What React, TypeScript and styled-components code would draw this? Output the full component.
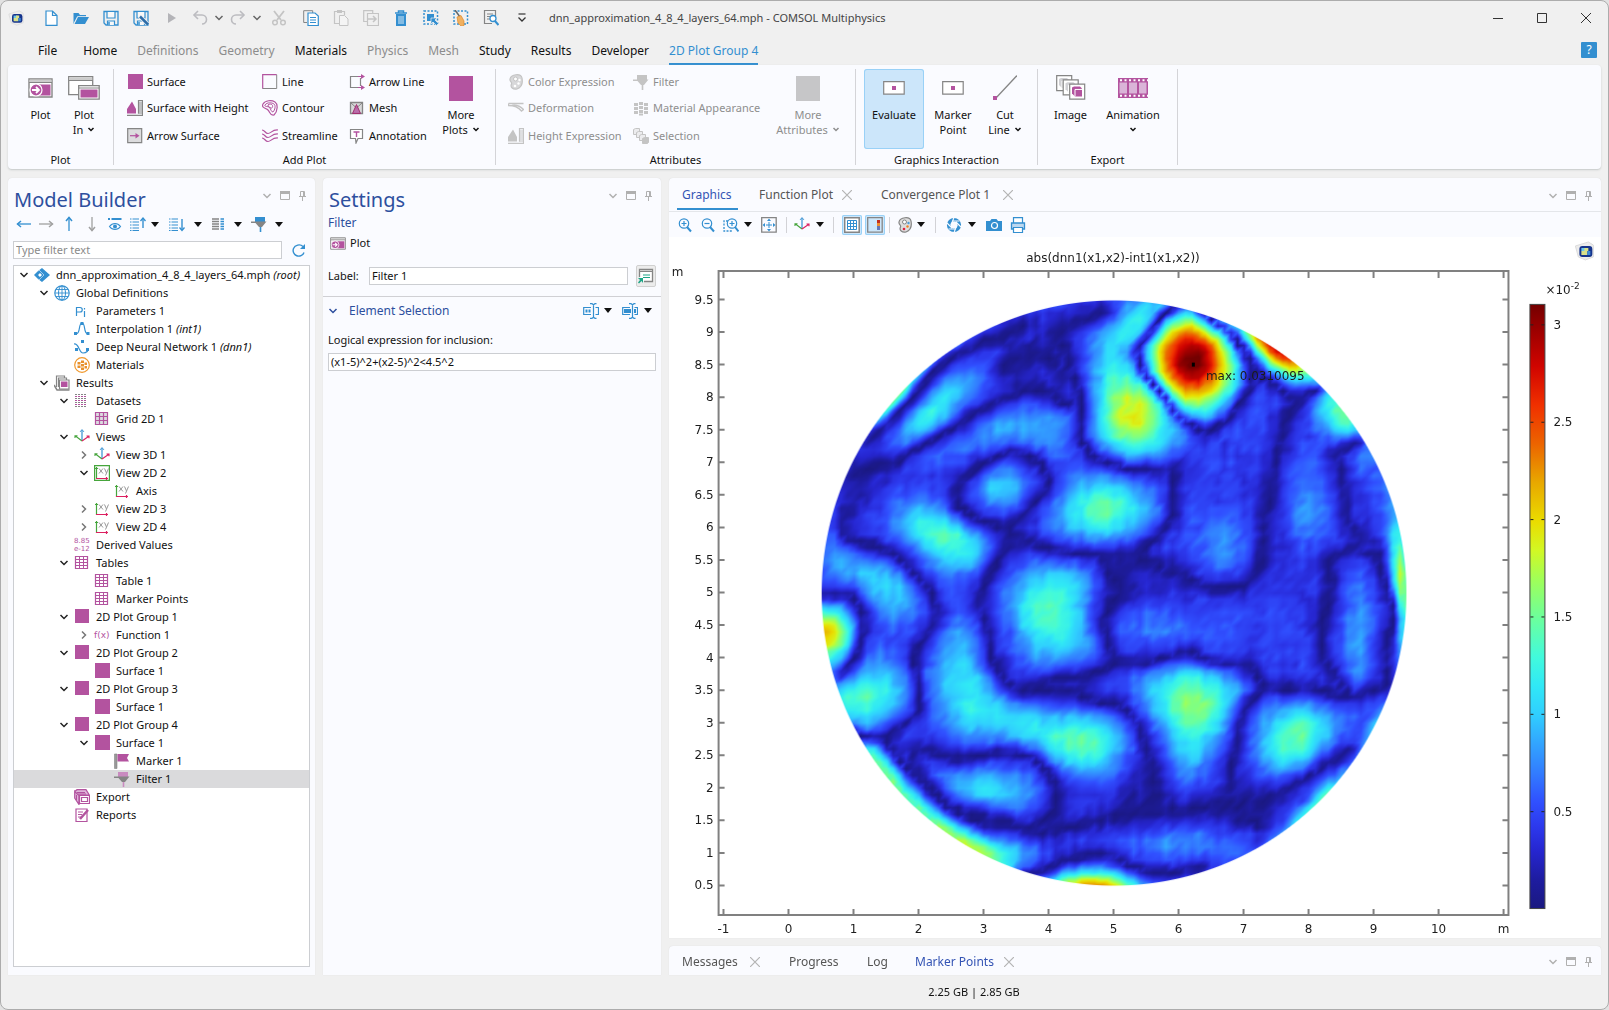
import React, { ReactNode, useLayoutEffect, useRef } from "react";
import styled, { createGlobalStyle, css } from "styled-components";

const PURPLE = "#b3539f";
const BLUE = "#338fd0";
const GREY = "#858585";
const PALE = "#c4c4c4";
const NAVY = "#2d4f9e";
const PANEL = "#fafbff";

const GlobalStyle = createGlobalStyle`
  * { box-sizing: border-box; }
  html, body, #root { height: 100%; }
  body {
    margin: 0;
    background: #e2e2e2;
    color: #111;
    font: 11px/18px "Noto Sans", "Open Sans", sans-serif;
  }
  button, input { font: inherit; color: inherit; }
  button { border: 0; padding: 0; background: none; }
  h1, h2 { margin: 0; font-weight: 400; }
  svg { display: block; flex: none; }
`;

/* ---------- window frame ---------- */

const Window = styled.div`
  display: flex;
  flex-direction: column;
  height: 100vh;
  min-height: 700px;
  background: #f0f0f0;
  border: 1px solid #acacac;
  border-radius: 8px;
  padding: 0 7px;
`;

const TitleBar = styled.header`
  display: flex;
  flex: none;
  align-items: center;
  height: 34px;
  margin-right: -7px;
`;

const AppMark = styled.span`
  display: flex;
  width: 28px;
`;

const QuickButton = styled.button<{ $w?: number }>`
  display: flex;
  align-items: center;
  justify-content: center;
  width: ${(p) => p.$w ?? 30}px;
  height: 24px;
`;

const WindowTitle = styled.span`
  flex: 1;
  margin-left: 11px;
  color: #444;
`;

const WindowButton = styled.button`
  display: flex;
  align-items: center;
  justify-content: center;
  width: 44px;
  height: 28px;
`;

const MenuBar = styled.nav`
  display: flex;
  flex: none;
  align-items: stretch;
  gap: 20px;
  height: 30px;
  padding: 0 4px 0 30px;
  font-size: 12px;
`;

const MenuTab = styled.button<{ $off?: boolean; $on?: boolean; $first?: boolean }>`
  margin-right: ${(p) => (p.$first ? 6 : 0)}px;
  padding-top: 3px;
  border-bottom: 2px solid ${(p) => (p.$on ? BLUE : "transparent")};
  color: ${(p) => (p.$on ? BLUE : p.$off ? "#8c8c8c" : "#111")};
`;

const HelpButton = styled.button`
  align-self: center;
  width: 16px;
  height: 16px;
  margin-left: auto;
  border-radius: 1px;
  background: ${BLUE};
  color: #fff;
  line-height: 16px;
`;

/* ---------- ribbon ---------- */

const Ribbon = styled.section`
  display: flex;
  flex: none;
  height: 104px;
  padding: 4px 0;
  background: ${PANEL};
  border-radius: 4px;
  box-shadow: 0 1px 2px #c4c8c8;
`;

const Group = styled.div<{ $w: number; $pad: number }>`
  display: flex;
  flex-direction: column;
  width: ${(p) => p.$w}px;
  padding-left: ${(p) => p.$pad}px;
  border-right: 1px solid #d4d4d8;
`;

const GroupBody = styled.div`
  display: flex;
  flex: none;
  height: 84px;
`;

const GroupLabel = styled.div<{ $pad: number }>`
  margin-left: -${(p) => p.$pad}px;
  text-align: center;
  line-height: 14px;
`;

const Commands = styled.div<{ $cols: string }>`
  display: grid;
  grid-template-columns: ${(p) => p.$cols};
  grid-template-rows: 25px 28px 28px;
  grid-auto-flow: column;
`;

const Command = styled.button`
  display: flex;
  align-items: center;
  gap: 4px;
  white-space: nowrap;
  &:disabled { color: #8e8e8e; }
`;

const BigButton = styled.button<{ $w: number; $on?: boolean }>`
  display: flex;
  flex-direction: column;
  align-items: center;
  width: ${(p) => p.$w}px;
  height: 80px;
  border-radius: 3px;
  line-height: 15px;
  &:disabled { color: #8e8e8e; }
  ${(p) => p.$on && css`background: #cce6fa; box-shadow: inset 0 0 0 1px #99d1f7;`}
`;

const BigIcon = styled.span`
  display: flex;
  align-items: center;
  height: 38px;
`;

const LabelLine = styled.span`
  display: flex;
  align-items: center;
  gap: 4px;
  height: 15px;
`;

/* ---------- panels ---------- */

const Workspace = styled.main`
  display: grid;
  grid-template-columns: 307fr 338fr 932fr;
  grid-template-rows: minmax(0, 1fr);
  gap: 8px;
  flex: 1;
  min-height: 0;
  padding-top: 9px;
`;

const Panel = styled.section<{ $pad?: string }>`
  display: flex;
  flex-direction: column;
  min-width: 0;
  padding: ${(p) => p.$pad ?? "0"};
  background: ${PANEL};
  border-radius: 4px 4px 0 0;
  box-shadow: 0 0 1px #d0d0d0;
`;

const PanelHead = styled.div`
  display: flex;
  flex: none;
  justify-content: space-between;
  height: 37px;
`;

const PanelTitle = styled.h1`
  padding: 3px 0 0 1px;
  font-size: 20px;
  line-height: 37px;
  color: ${NAVY};
`;

const PanelTools = styled.div`
  display: flex;
  align-items: center;
  gap: 8px;
  height: 34px;
  padding: 2px 3px 0 0;
`;

const ToolRow = styled.div`
  display: flex;
  align-items: center;
  height: 18px;
`;

const Tool = styled.button<{ $w: number; $on?: boolean }>`
  display: flex;
  align-items: center;
  justify-content: center;
  width: ${(p) => p.$w}px;
  height: 20px;
  border-radius: 2px;
  ${(p) => p.$on && css`background: #cce6fa; box-shadow: inset 0 0 0 1px #99d1f7;`}
`;

const TextBox = styled.input`
  flex: 1;
  min-width: 0;
  width: 100%;
  height: 18px;
  padding: 0 2px;
  border: 1px solid #ccced2;
  background: #fff;
  &::placeholder { color: #8a8a8a; opacity: 1; }
`;

const FilterRow = styled.div`
  display: flex;
  align-items: center;
  gap: 9px;
  margin: 7px 0 5px;
  padding-right: 3px;
`;

const Tree = styled.ul`
  flex: 1;
  min-height: 0;
  margin: 0;
  padding: 0;
  overflow: hidden;
  list-style: none;
  background: #fff;
  border: 1px solid #ccced2;
`;

const TreeRow = styled.li<{ $depth: number; $on?: boolean }>`
  display: flex;
  align-items: center;
  height: 18px;
  padding-left: ${(p) => p.$depth * 20}px;
  background: ${(p) => (p.$on ? "#dadadc" : "transparent")};
  white-space: pre;
`;

const Twisty = styled.span`
  display: flex;
  justify-content: center;
  width: 20px;
`;

const TreeIcon = styled.span`
  display: flex;
  width: 22px;
`;

const SubTitle = styled.div`
  height: 18px;
  margin-top: -1px;
  font-size: 12px;
  color: ${NAVY};
`;

const PlotButton = styled.button`
  display: flex;
  align-items: center;
  gap: 4px;
  height: 20px;
  margin-top: 1px;
  padding-left: 2px;
`;

const LabelRow = styled.div`
  display: flex;
  align-items: center;
  gap: 8px;
  margin-top: 12px;
  label { width: 33px; }
`;

const RenameButton = styled.button`
  display: flex;
  align-items: center;
  justify-content: center;
  width: 20px;
  height: 22px;
  border: 1px solid #d0d0d0;
  border-radius: 2px;
  background: #ececec;
`;

const SectionHead = styled.div`
  display: flex;
  align-items: center;
  height: 28px;
  margin: 9px -5px 0;
  padding: 0 8px 0 5px;
  border-top: 1px solid #d0d0d4;
`;

const SectionTitle = styled.h2`
  flex: 1;
  margin-left: 11px;
  font-size: 12px;
  color: ${NAVY};
`;

const FieldLabel = styled.label`
  margin: 7px 0 4px;
`;

const ExpressionRow = styled.div`
  display: flex;
`;

const RightColumn = styled.div`
  display: flex;
  flex-direction: column;
  gap: 8px;
  min-width: 0;
`;

const GraphicsPanel = styled(Panel)`
  flex: 1;
  min-height: 0;
`;

const TabStrip = styled.div`
  display: flex;
  flex: none;
  height: 34px;
  padding: 0 5px 0 8px;
  border-bottom: 1px solid #e4e6ea;
`;

const TabSet = styled.div`
  display: flex;
  flex: 1;
`;

const Tab = styled.button<{ $on?: boolean; $line?: boolean; $w: number }>`
  display: flex;
  align-items: center;
  gap: 7px;
  width: ${(p) => p.$w}px;
  height: 32px;
  padding: 4px 0 0 5px;
  border-bottom: 2px solid ${(p) => (p.$line ? BLUE : "transparent")};
  font-size: 12px;
  white-space: nowrap;
  color: ${(p) => (p.$on ? "#3454b4" : "#555")};
`;

const TabGap = styled.span`
  width: 16px;
`;

const TabName = styled.span<{ $w: number }>`
  flex: none;
  width: ${(p) => p.$w}px;
  text-align: left;
`;

const BottomStrip = styled.div`
  display: flex;
  align-items: center;
  height: 29px;
  padding: 0 5px 0 8px;
  overflow: hidden;
`;

const GraphicsTools = styled.div`
  display: flex;
  flex: none;
  align-items: center;
  height: 25px;
  padding-left: 4px;
`;

const Rule = styled.span<{ $gap: number }>`
  width: 1px;
  height: 16px;
  margin: 0 ${(p) => p.$gap}px;
  background: #d2d2d6;
`;

const ToggleSet = styled.div`
  display: flex;
  gap: 3px;
`;

const PlotArea = styled.div`
  display: grid;
  grid-template-rows: minmax(0, 1fr);
  flex: 1;
  min-height: 0;
  background: #fff;
  > * {
    grid-area: 1 / 1;
    width: 100%;
    height: 100%;
    min-height: 0;
    object-fit: contain;
  }
`;

const StatusBar = styled.footer`
  flex: none;
  height: 34px;
  padding-left: 339px;
  text-align: center;
  line-height: 34px;
`;

/* ---------- icons ---------- */

const Svg = ({ w = 16, h = 16, children }: { w?: number; h?: number; children: ReactNode }) => (
  <svg width={w} height={h} viewBox={`0 0 ${w} ${h}`} fill="none" aria-hidden="true">{children}</svg>
);

const Caret = () => <Svg w={8} h={5}><path d="M0 0h8L4 5z" fill="#111" /></Svg>;
const Chevron = ({ c = "#222" }) => <Svg w={10} h={6}><path d="M1.5 1L5 4.5 8.5 1" stroke={c} strokeWidth="1.5" /></Svg>;
const MiniChevron = () => <Svg w={8} h={5}><path d="M1.5 1L4 3.500 6.500 1" stroke="currentColor" strokeWidth="1.500" /></Svg>;
const ChevronRight = () => <Svg w={6} h={10}><path d="M1 1.500L4.500 5 1 8.500" stroke="#777" strokeWidth="1.500" /></Svg>;
const Cross = () => <Svg w={10} h={10}><path d="M0 0l10 10M10 0L0 10" stroke="#b4b4b4" strokeWidth="1.200" /></Svg>;

const DockIcons = () => (
  <PanelTools>
    <Chevron c="#b0b0b0" />
    <Svg w={10} h={10}><path d="M.5.5h9v8h-9z" stroke="#b0b0b0" /><path d="M0 0h10v3H0z" fill="#b0b0b0" /></Svg>
    <Svg w={9} h={10}><path d="M2.500 5V.5h4V5M1 5.500h7M4.500 6v4M5.500 1v4" stroke="#b0b0b0" /></Svg>
  </PanelTools>
);

const Cube = ({ s = 16 }) => (
  <svg width={s} height={s} viewBox="0 0 20 20" aria-hidden="true">
    <path d="M1 5l13-4 5 3v12l-8 3-7-3z" fill="#ececec" stroke="#dcdcdc" />
    <rect x="5" y="5" width="13" height="11" rx="3" fill="#16348c" />
    <path d="M7 7h5v3H7z" fill="#6cc8e8" /><path d="M10 7h4v3h-4zM7 10h6v4H7z" fill="#d8e08a" /><path d="M13 10h3v4h-3z" fill="#3c8ad8" />
  </svg>
);

const NewFile = () => <Svg><path d="M3 1h6.500L14 5.500V15.300H3zM9.500 1v4.500H14" stroke={BLUE} strokeWidth="1.200" fill="#fff" /></Svg>;
const OpenFile = () => <Svg><path d="M.5 14V3h5l1.500 2h6v2H4.500z" fill={BLUE} /><path d="M1.500 14L5 7h11l-4 7z" fill={BLUE} /><path d="M1 13.500L4.500 6.500H15" stroke="#f0f0f0" strokeWidth=".8" /></Svg>;
const Floppy = () => <><path d="M1 1.500h14v13.500H3L1 13z" stroke={BLUE} strokeWidth="1.300" /><path d="M4 1.500h8V8H4zM4.500 15v-4h7v4" stroke={BLUE} strokeWidth="1.200" fill="#f8f8f8" /><path d="M6 12v3" stroke={BLUE} strokeWidth="1.500" /></>;
const SaveIcon = () => <Svg><Floppy /></Svg>;
const SaveAs = () => <Svg><Floppy /><path d="M6.500 6l8 8" stroke="#f0f0f0" strokeWidth="4" /><path d="M7 6.500l8 8" stroke="#2c6ca8" strokeWidth="2.500" /></Svg>;
const Play = () => <Svg><path d="M5 3l8 5-8 5z" fill="#b4b4b8" /></Svg>;
const Undo = ({ flip = false }) => <Svg><g transform={flip ? "matrix(-1 0 0 1 16 0)" : undefined}><path d="M2 5h8a4.500 4.500 0 010 9" stroke="#bcbcc0" strokeWidth="1.600" /><path d="M6 1L2 5l4 4" stroke="#bcbcc0" strokeWidth="1.600" /></g></Svg>;
const Cut = () => <Svg><path d="M3 1l7 9M13 1L6 10" stroke={PALE} strokeWidth="1.800" /><circle cx="4" cy="12.500" r="2.300" stroke={PALE} strokeWidth="1.500" /><circle cx="12" cy="12.500" r="2.300" stroke={PALE} strokeWidth="1.500" /></Svg>;
const Copy = () => <Svg><path d="M4 12.500H.7V.7h9V3" stroke={GREY} /><path d="M5 3h7l3.300 3v9.500H5z" fill="#fff" stroke={BLUE} strokeWidth="1.200" /><path d="M7 7.500h6M7 10h6M7 12.500h6" stroke={BLUE} /></Svg>;
const Paste = () => <Svg><path d="M6 13.500H1.500v-12h10V5" stroke={PALE} strokeWidth="1.200" /><path d="M4 0h5v3H4z" fill={PALE} /><path d="M6.500 5.500h5L15 9v6.500H6.500z" stroke={PALE} fill="#f4f4f4" /></Svg>;
const Duplicate = () => <Svg><path d="M4 11.500H.7V.7h9V3.500M4.500 3.500h11v12h-11z" stroke={PALE} strokeWidth="1.200" /><path d="M5 9h8M10 6l3 3-3 3" stroke={PALE} strokeWidth="1.500" /></Svg>;
const Trash = () => <Svg><path d="M5.500 2.500V1h5v1.500M2 3h12" stroke={BLUE} strokeWidth="1.500" /><path d="M3 4h10v12H3z" fill={BLUE} /><path d="M6 6v8M8 6v8M10 6v8" stroke="#fff" strokeWidth=".8" /></Svg>;
const SelectIcon = () => <Svg><path d="M1 1h13.500v13H1z" stroke={BLUE} strokeWidth="1.500" strokeDasharray="2 1.500" /><path d="M4 4h7v7H4z" fill={BLUE} /><path d="M8 8h6l-2 2 3.500 3.500-2 2L10 12l-2 2z" fill={BLUE} stroke="#f0f0f0" strokeWidth=".7" /></Svg>;
const Broom = () => <Svg><path d="M1 1h13.500v13H1z" stroke={BLUE} strokeWidth="1.500" strokeDasharray="2 1.500" /><path d="M2 0l5 7" stroke="#666" strokeWidth="1.500" /><path d="M4 7l4-1.500 3 5.500v4.500L8 16l-3-3z" fill="#f0b060" stroke="#e08a28" strokeWidth=".7" /></Svg>;
const Find = () => <Svg><path d="M9 13.500H1.500v-13h11V6M4 4h6M4 6.500h4M4 9h3" stroke={GREY} strokeWidth="1.200" /><circle cx="10" cy="8.500" r="3" stroke={BLUE} strokeWidth="1.300" fill="#fff" /><path d="M12 11l3.500 4" stroke={BLUE} strokeWidth="2" /></Svg>;
const More = () => <Svg w={10} h={10}><path d="M1.500 1h7" stroke="#333" strokeWidth="1.200" /><path d="M1.500 4.500L5 8l3.500-3.500" stroke="#333" strokeWidth="1.300" /></Svg>;

const PlotWin = ({ w = 25, h = 20 }) => (
  <svg width={w} height={h} viewBox="0 0 25 20" fill="none" aria-hidden="true">
    <path d="M1 1h23v18H1z" fill="#fff" stroke={GREY} strokeWidth="1.400" /><path d="M1.500 1.500h22v3h-22z" fill="#ccc" /><path d="M1 4.500h23" stroke={GREY} />
    <path d="M11 6.500h11.500v11H11z" fill={PURPLE} /><circle cx="8" cy="12" r="6" fill={PURPLE} stroke="#fff" strokeWidth="1.200" /><path d="M4 12h7M8 9l3 3-3 3" stroke="#fff" strokeWidth="1.800" />
  </svg>
);
const PlotIn = () => <Svg w={32} h={24}><path d="M.7.7h24v18H.7z" fill="#fff" stroke={GREY} strokeWidth="1.300" /><path d="M1.300 1.300h23v3h-23z" fill="#ccc" /><path d="M1 4.500h24" stroke={GREY} /><path d="M10.700 9.700h20.500v13.500H10.700z" fill="#fff" stroke={GREY} strokeWidth="1.300" /><path d="M11 12h20" stroke={GREY} /><path d="M12.500 13.500h17v8h-17z" fill={PURPLE} /></Svg>;

const Square = ({ s = 15, c = PURPLE }) => <Svg><path d={`M0 0h${s}v${s}h-${s}z`} transform="translate(1 0)" fill={c} /></Svg>;
const BigSquare = ({ c = PURPLE }) => <Svg w={24} h={25}><path d="M0 0h24v25H0z" fill={c} /></Svg>;
const Height = ({ off = false }) => <Svg><path d="M0 13.500L0 9 5 1.500 9 9v4.500z" fill={off ? PALE : PURPLE} /><path d="M0 15.300h15.500V.7h-4v13" stroke={off ? PALE : GREY} strokeWidth="1.200" /><path d="M12 3h3M12 5h3M12 7h3M12 9h3M12 11h3M12 13h3" stroke={off ? PALE : GREY} /></Svg>;
const ArrowSurface = () => <Svg><path d="M.7.7h14v14H.7z" fill="#dcdcde" stroke={GREY} strokeWidth="1.200" /><path d="M3 7.700h7" stroke={PURPLE} strokeWidth="1.200" /><path d="M8.500 5l4 2.700-4 2.700z" fill={PURPLE} /></Svg>;
const LineIcon = () => <Svg><path d="M.7 14.700V.7h14" stroke={PURPLE} strokeWidth="1.200" /><path d="M.7 14.500h14V.7" stroke={GREY} /></Svg>;
const Contour = () => <Svg><path d="M1 4c2-4 9-4 12-2s3 9-1 13c-4 1-4-3-6-5S-1 8 1 4z" stroke={PURPLE} strokeWidth="1.200" /><path d="M3 5c2-3 7-2.500 9-1s1 6-1 8c-2 0-2-3-3.500-4.500S2 7 3 5z" stroke={PURPLE} /><path d="M6 5c1-1.500 4-1 4.500.5s-.5 3-1.500 2.500S5.500 6.500 6 5z" stroke={PURPLE} /></Svg>;
const Streamline = () => <Svg>{[1, 5, 9].map((y) => <path key={y} d={`M0 ${y + 1}c3 0 3 3.500 6 3.500s4-4 10-3.500`} stroke={PURPLE} strokeWidth="1.200" />)}</Svg>;
const ArrowLine = () => <Svg><path d="M10 2.500H1.500v11H10M11.500 4v8" stroke={GREY} strokeWidth="1.200" /><path d="M9 2.500h4M9 13.500h4" stroke={PURPLE} strokeWidth="1.200" /><path d="M12 0l4 2.500L12 5zM12 11l4 2.500-4 2.500z" fill={PURPLE} /></Svg>;
const MeshIcon = () => <Svg><path d="M1.500 2.500h12v11h-12z" fill="#d8d8da" stroke={GREY} strokeWidth="1.300" /><path d="M2 3l5.500 5L13 3" stroke={GREY} /><path d="M3.500 13.500l4-9 4 9z" fill={PURPLE} fillOpacity=".8" stroke="#a03070" /></Svg>;
const Annotation = () => <Svg><path d="M1.500 1.500h12v9H9L7 15l-.5-4.500h-5z" stroke={GREY} strokeWidth="1.200" fill="#fff" /><path d="M4.500 4h6M7.500 4v5" stroke={PURPLE} strokeWidth="1.400" /></Svg>;
const PaletteIcon = ({ off = false }) => (
  <Svg><path d="M2 5c1-5 11-6 12-1s0 9-5 11c-4 1-7-2-5.500-5 1-2-2-2-1.500-5z" fill={off ? "#d8d8da" : "#ddd"} stroke={off ? PALE : GREY} strokeWidth="1.200" /><circle cx="7.500" cy="5" r="2" fill="#fff" stroke={off ? PALE : GREY} /><circle cx="11.500" cy="6" r="1.200" fill={off ? "#fff" : "#4c9cd8"} /><circle cx="10.500" cy="9.500" r="1.200" fill={off ? "#fff" : "#f08020"} /><circle cx="7" cy="12" r="1.300" fill={off ? "#fff" : "#e02040"} /></Svg>
);
const Deform = () => <Svg><path d="M.5 3.500h15M.5 3.500v2c5 0 9 .5 13 5.500l2-1.500C12 6 9 4.500 4 5.500" stroke={PALE} strokeWidth="1.400" /></Svg>;
const Funnel = ({ top = PALE, body = PALE }) => <Svg><path d="M4 1h10v5H4z" fill={top} /><path d="M0 5.500h15.500L11 11H8L4.500 7H0z" fill={body} /><path d="M9.500 11v5" stroke={top} strokeWidth="1.600" /></Svg>;
const MaterialApp = () => <Svg>{[1, 6, 11].map((x) => [3, 7, 11].map((y) => <rect key={`${x}-${y}`} x={x} y={x === 6 ? y - 1 : y} width="4" height="3" fill={PALE} />))}<path d="M6 13.500h4v2H6z" fill={PALE} /></Svg>;
const Selection = () => <Svg>{[0, 3, 6, 9].map((o) => <path key={o} d={`M${o + 0.5} ${o + 1.5}l2-1h4v5l-1 1h-5z`} fill={o === 9 ? PALE : "#ececee"} stroke={PALE} />)}</Svg>;
const Evaluate = () => <Svg w={22} h={14}><path d="M.7.7h20.500v12.500H.7z" fill="#fff" stroke={GREY} strokeWidth="1.200" /><path d="M9 5h4v4H9z" fill={PURPLE} /></Svg>;
const CutLine = () => <Svg w={24} h={26}><path d="M2 24L24 .5" stroke={GREY} strokeWidth="1.300" /><path d="M0 21h4v4H0z" fill={PURPLE} /></Svg>;
const ImageIcon = () => <Svg w={30} h={26}>{[0, 6.5, 13].map((o, i) => <g key={o} transform={`translate(${o} ${o * 0.65})`}><path d="M.7.7h15v15H.7z" fill="#fff" stroke={GREY} strokeWidth="1.200" /><path d="M3 4l2-1h6l2 2v8H6l-3-3z" fill={i === 2 ? PURPLE : "#d0d0d4"} /><path d="M6 13V6h7" stroke="#fff" /></g>)}</Svg>;
const Film = () => <Svg w={30} h={20}><path d="M0 0h30v20H0z" fill={PURPLE} /><path d="M1.500 4.500h7.500v11H1.500zM11 4.500h8v11h-8zM21 4.500h7.500v11H21z" fill="#dab4d8" /><path d="M2 2.200h28M2 17.800h28" stroke="#fff" strokeWidth="2" strokeDasharray="2 2.500" /></Svg>;

const Arrow = ({ dir, c = BLUE }: { dir: number; c?: string }) => <Svg><g transform={`rotate(${dir} 8 8)`}><path d="M1.500 8H15" stroke={c} strokeWidth="1.300" /><path d="M5 5L1.500 8 5 11" stroke={c} strokeWidth="1.500" /></g></Svg>;
const EyeIcon = () => <Svg><path d="M1 3h2M4.500 3h10" stroke={BLUE} strokeWidth="2" /><path d="M2.500 10.500c3-4 8-4 11 0-3 4-8 4-11 0z" stroke={BLUE} strokeWidth="1.200" /><circle cx="8" cy="10.500" r="2" fill={BLUE} /></Svg>;
const ListArrow = ({ up = false }) => <Svg><path d="M0 3h9M0 6h9M0 9h9M0 12h9M0 14.500h9" stroke={BLUE} strokeDasharray="1.500 1 8" /><path d={up ? "M13 3v9" : "M13 3v11"} stroke={BLUE} strokeWidth="1.400" /><path d={up ? "M10.500 5L13 2l2.500 3" : "M10.500 11.500L13 14.500l2.500-3"} stroke={BLUE} strokeWidth="1.300" /></Svg>;
const Columns = () => <Svg w={12}><path d="M0 3h7M0 5.500h7M0 8h7M0 10.500h7M0 13h7" stroke={GREY} strokeWidth="1.500" /><path d="M8.500 3h3.500M8.500 5.500h3.500M8.500 8h3.500M8.500 10.500h3.500M8.500 13h3.500" stroke={BLUE} strokeWidth="1.500" /></Svg>;
const Refresh = () => <Svg><path d="M13 10.500A5.500 5.500 0 112.500 6.500C4 3 9 1.500 12 4.500" stroke={BLUE} strokeWidth="1.400" /><path d="M14 2v5H9z" fill={BLUE} /></Svg>;

const Axes = () => <Svg><path d="M8 1v10" stroke={BLUE} strokeWidth="1.200" /><path d="M6 3l2-2.500L10 3" stroke={BLUE} strokeWidth=".8" /><path d="M8 12L1.500 7M1 9V6.700h2.500" stroke="#46a53c" strokeWidth="1.100" /><path d="M8 12l6.500-4.500M12.500 7h2.500v2.300" stroke="#dc2060" strokeWidth="1.100" /></Svg>;
const XyAxes = ({ boxed = false }) => (
  <Svg>{boxed && <path d="M.6.6h14.800v14.800H.6z" stroke="#46a53c" strokeWidth="1.200" />}<path d="M2.500 14V2M1 3.500h3" stroke="#46a53c" strokeWidth="1.200" /><path d="M2 13.500h12M12.500 12v3" stroke="#dc2060" strokeWidth="1.200" /><path d="M5 3.500l4 5M9 3.500l-4 5M10.500 3.500l2 4.500M14.500 3.500l-3 7" stroke="#999" /></Svg>
);
const RootIcon = () => <Svg><path d="M0 8l4-4 3 1-3 3 3 3-3 1z" fill={BLUE} /><path d="M8 1l8 7-8 7-4-3 4-4-4-4z" fill={BLUE} /><path d="M5 3l5 5-5 5" stroke="#bcdcf4" strokeWidth=".8" /></Svg>;
const Globe = () => <Svg><circle cx="8" cy="8" r="7.200" stroke={BLUE} strokeWidth="1.200" /><ellipse cx="8" cy="8" rx="3.500" ry="7.200" stroke={BLUE} /><path d="M8 1v14M1 8h14M2 4.500h12M2 11.500h12" stroke={BLUE} strokeWidth=".9" /></Svg>;
const ParamIcon = () => <Svg><path d="M2.500 13V4.500H6a2.200 2.200 0 010 4.500H2.500M10.500 8v6M10.500 5v1.500" stroke={BLUE} strokeWidth="1.200" /></Svg>;
const Interp = () => <Svg><path d="M2 13c5 0 2-11 6-11s1 11 6 11" stroke={BLUE} strokeWidth="1.200" /><path d="M0 11h3v3H0zM6.500 1h3v3h-3zM12.500 11h3v3h-3z" fill={BLUE} /></Svg>;
const DnnIcon = () => <Svg><path d="M0 5c5-1 5 9 9 9s4-2 5-2" stroke={BLUE} strokeWidth="1.200" /><path d="M7 1h3v3H7zM1 9h3v3H1zM12 9h3v3h-3z" fill={BLUE} /></Svg>;
const MaterialsIcon = () => <Svg><circle cx="8" cy="8" r="7.300" stroke="#f0982c" strokeWidth="1.200" /><path d="M3.500 5h3v2.500h-3zM7 3.500h3V6H7zM10.500 5.500h2.500V8h-2.500zM7 7h3v2.500H7zM10.500 9h2.500v2.500h-2.500zM7 10.500h3V13H7zM3.500 8.500h3V11h-3z" fill="#e8912c" /></Svg>;
const ResultsIcon = () => <Svg><path d="M2.500 12V1h8v2M4.500 12V3h8v2" stroke={GREY} strokeWidth="1.200" /><path d="M0 10l3 5h12.500" stroke={GREY} strokeWidth="1.500" /><path d="M5.500 5h9.500v9H5.500z" fill="#fff" stroke={GREY} strokeWidth="1.200" /><path d="M7 6.500h6.500v5.500H7z" fill={PURPLE} /></Svg>;
const Datasets = () => <Svg>{[2, 4, 6, 8, 10, 12, 14].map((y, i) => <path key={y} d={`M1 ${y - 0.5}h12`} stroke={i % 2 ? PURPLE : GREY} strokeDasharray="2 1" />)}</Svg>;
const GridIcon = ({ fill = "#fff", n = 3 }) => <Svg><path d="M1.500 1.500h12v12h-12z" fill={fill} stroke={PURPLE} strokeWidth="1.200" />{n === 3 ? <path d="M5.500 1v13M9.500 1v13M1 5.500h12.500M1 9.500h12.500" stroke={PURPLE} strokeWidth="1.200" /> : <path d="M5.500 1v13M9.500 1v13M1 4.500h12.500M1 7.500h12.500M1 10.500h12.500" stroke={PURPLE} />}</Svg>;
const TinyText = styled.span<{ $s: number }>`
  width: 18px;
  font: ${(p) => p.$s}px/8px "DejaVu Sans", sans-serif;
  color: ${PURPLE};
  white-space: pre;
`;
const Flag = () => <Svg><path d="M.5 1h2.500v14.500H.5z" fill="#999" stroke={GREY} strokeWidth=".6" /><path d="M3.500 1H15l-2 4 2 3.500H3.500z" fill={PURPLE} /></Svg>;
const ExportIcon = () => <Svg><path d="M.7 2.500L5 6.500v9L.7 9zM.7 2.500L3 .7h9L15.300 6H5" fill="#dfb4da" stroke={PURPLE} strokeWidth="1.200" /><path d="M5.500 6.500h10v8h-10zM7.500 8.500h6v4h-6z" stroke={PURPLE} strokeWidth="1.200" fill="#fff" /><path d="M3 3.500h8M4 5h8M2.500 6v5" stroke={PURPLE} /></Svg>;
const ReportsIcon = () => <Svg><path d="M2 2h11v12.500H2z" stroke={PURPLE} strokeWidth="1.200" /><path d="M4 5h5M4 7.500h4M4 10h3" stroke={PURPLE} /><path d="M6 12l8-9" stroke={PURPLE} strokeWidth="2.500" /></Svg>;

const Zoom = ({ mode }: { mode: "in" | "out" | "box" }) => (
  <Svg>{mode === "box" && <path d="M5 4H1v10h8" stroke={BLUE} strokeWidth="1.300" strokeDasharray="2 1.300" />}<circle cx={mode === "box" ? 9 : 7} cy="6.500" r="4.700" stroke={BLUE} strokeWidth="1.200" fill={PANEL} /><path d={mode === "box" ? "M12 10l3.500 4.500" : "M10 10l4 4.500"} stroke={BLUE} strokeWidth="2" /><path d={mode === "out" ? "M4.500 6.500h5" : mode === "in" ? "M4.500 6.500h5M7 4v5" : "M6.500 6.500h5M9 4v5"} stroke={BLUE} strokeWidth="1.200" /></Svg>
);
const Extents = () => <Svg><path d="M.7.7h14.500v14.500H.7z" stroke={GREY} strokeWidth="1.300" /><path d="M8 1.500L10 4H6zM8 14.500L10 12H6zM1.500 8L4 6v4zM14.500 8L12 6v4z" fill={BLUE} /><path d="M8 5v6M5 8h6" stroke={BLUE} /></Svg>;
const GridToggle = () => <Svg><path d="M.7.7h14.500v14.500H.7z" stroke={GREY} strokeWidth="1.500" fill="#fff" /><path d="M3.500 3.500h9v9h-9zM6.500 3v10M9.500 3v10M3 6.500h10M3 9.500h10" stroke={BLUE} /></Svg>;
const LegendToggle = () => <Svg><path d="M.7.7h14.500v14.500H.7z" stroke={GREY} strokeWidth="1.300" /><path d="M10 3h3v3h-3z" fill="#c03020" /><path d="M10 6h3v3h-3z" fill="#f09030" /><path d="M10 9h3v4h-3z" fill="#6478b8" /></Svg>;
const Aperture = () => <Svg><circle cx="8" cy="8" r="5.300" stroke={BLUE} strokeWidth="3.600" /><path d="M5 8L8 .5M6 11L1 6M10 12H2.500M11 8l-3 7.500M10 5l5 5M6 4h7.500" stroke={PANEL} strokeWidth="1.100" /></Svg>;
const Camera = () => <Svg><path d="M0 4h4l1.500-2h5L12 4h4v10H0z" fill={BLUE} /><circle cx="8.500" cy="8.500" r="3" stroke="#fff" strokeWidth="1.200" /></Svg>;
const Printer = () => <Svg><path d="M3.500 6V.7h9V6" stroke={BLUE} strokeWidth="1.200" fill="#fff" /><path d="M1.500 6h13v6h-13z" fill="#bcd8f0" stroke={BLUE} strokeWidth="1.300" /><path d="M3.500 10.500h9v5h-9z" fill="#fff" stroke={BLUE} strokeWidth="1.200" /></Svg>;
const FieldIcon = ({ full = false }) => <Svg><path d="M8 4.500H.7v7H8M12.500 4.500h3v7h-3" stroke={BLUE} strokeWidth="1.200" /><path d="M7 .7h2l1.500 1 1.500-1h1.500M7 15.300h2l1.500-1 1.500 1h1.500M10.500 1.500v13" stroke={BLUE} strokeWidth="1.200" /><path d={full ? "M2 6h7v4H2zM12 6h2v4h-2z" : "M2.500 6.500h2v3h-2zM5.500 6.500h2v3h-2z"} fill={BLUE} /></Svg>;
const RenameIcon = () => <Svg><path d="M1.500 9V1.500h13v12H6" stroke={GREY} strokeWidth="1.300" fill="#fff" /><path d="M1.500 1.500h13v2h-13z" fill="#ccc" stroke={GREY} /><path d="M5 7h7M5 9.500h7" stroke="#1ea587" strokeWidth="1.200" /><path d="M0 10h5v5L3.500 13 1 15.500 0 14.500 2 12z" fill="#1ea587" /></Svg>;

/* ---------- tree content ---------- */

type Node = { d: number; open?: boolean; icon: ReactNode; text: string; tag?: string; on?: boolean };

const NODES: Node[] = [
  { d: 0, open: true, icon: <RootIcon />, text: "dnn_approximation_4_8_4_layers_64.mph", tag: "root" },
  { d: 1, open: true, icon: <Globe />, text: "Global Definitions" },
  { d: 2, icon: <ParamIcon />, text: "Parameters 1" },
  { d: 2, icon: <Interp />, text: "Interpolation 1", tag: "int1" },
  { d: 2, icon: <DnnIcon />, text: "Deep Neural Network 1", tag: "dnn1" },
  { d: 2, icon: <MaterialsIcon />, text: "Materials" },
  { d: 1, open: true, icon: <ResultsIcon />, text: "Results" },
  { d: 2, open: true, icon: <Datasets />, text: "Datasets" },
  { d: 3, icon: <GridIcon fill="#dcdce0" />, text: "Grid 2D 1" },
  { d: 2, open: true, icon: <Axes />, text: "Views" },
  { d: 3, open: false, icon: <Axes />, text: "View 3D 1" },
  { d: 3, open: true, icon: <XyAxes boxed />, text: "View 2D 2" },
  { d: 4, icon: <XyAxes />, text: "Axis" },
  { d: 3, open: false, icon: <XyAxes />, text: "View 2D 3" },
  { d: 3, open: false, icon: <XyAxes />, text: "View 2D 4" },
  { d: 2, icon: <TinyText $s={7}>{"8.85\ne-12"}</TinyText>, text: "Derived Values" },
  { d: 2, open: true, icon: <GridIcon n={4} />, text: "Tables" },
  { d: 3, icon: <GridIcon n={4} />, text: "Table 1" },
  { d: 3, icon: <GridIcon n={4} />, text: "Marker Points" },
  { d: 2, open: true, icon: <Square s={14} />, text: "2D Plot Group 1" },
  { d: 3, open: false, icon: <TinyText $s={9}>f(x)</TinyText>, text: "Function 1" },
  { d: 2, open: true, icon: <Square s={14} />, text: "2D Plot Group 2" },
  { d: 3, icon: <Square />, text: "Surface 1" },
  { d: 2, open: true, icon: <Square s={14} />, text: "2D Plot Group 3" },
  { d: 3, icon: <Square />, text: "Surface 1" },
  { d: 2, open: true, icon: <Square s={14} />, text: "2D Plot Group 4" },
  { d: 3, open: true, icon: <Square />, text: "Surface 1" },
  { d: 4, icon: <Flag />, text: "Marker 1" },
  { d: 4, icon: <Funnel top="#c98bc0" body={GREY} />, text: "Filter 1", on: true },
  { d: 2, icon: <ExportIcon />, text: "Export" },
  { d: 2, icon: <ReportsIcon />, text: "Reports" },
];

/* ---------- error field ---------- */

const VIEW_W = 932;
const VIEW_H = 702;
const toX = (x: number) => 119 + 65.1 * x;
const toY = (y: number) => 356 + 65.2 * (5 - y);

/* value in units of 1e-2, followed by r, g, b */
const COLORS: number[][] = [
  [0, 26, 24, 128], [0.15, 30, 28, 160], [0.3, 38, 38, 208], [0.42, 44, 56, 236], [0.55, 48, 80, 255],
  [0.7, 50, 124, 255], [0.85, 50, 164, 255], [1, 48, 206, 255], [1.15, 48, 232, 246], [1.3, 66, 250, 220],
  [1.5, 108, 255, 156], [1.7, 160, 255, 88], [1.85, 210, 248, 36], [2, 234, 220, 0], [2.2, 232, 168, 0],
  [2.4, 236, 100, 0], [2.6, 240, 48, 0], [2.8, 208, 4, 0], [3, 152, 0, 0], [3.12, 116, 0, 0],
];

function colorAt(v: number): [number, number, number] {
  let k = 1;
  while (k < COLORS.length - 1 && COLORS[k][0] < v) k++;
  const a = COLORS[k - 1], b = COLORS[k];
  const t = Math.max(0, Math.min(1, (v - a[0]) / (b[0] - a[0])));
  return [a[1] + (b[1] - a[1]) * t, a[2] + (b[2] - a[2]) * t, a[3] + (b[3] - a[3]) * t];
}

/* x, y, semi axes, angle in degrees, amplitude */
const PEAKS: number[][] = [
  [6.2, 8.56, 0.5, 0.52, 0, 2.72], [7.5, 8.8, 0.46, 0.22, -42, 2.4], [5.28, 7.65, 0.38, 0.46, 25, 1.25],
  [2.25, 7.82, 0.62, 0.26, 42, 0.85], [1.68, 8.1, 0.5, 0.1, 49, 1.5], [3.6, 7.5, 0.7, 0.3, 8, 0.45],
  [2.4, 7.2, 0.5, 0.2, 35, 0.15], [3.27, 6.6, 0.3, 0.22, -20, 0.6], [4.85, 6.28, 0.48, 0.34, 0, 1.0],
  [2.2, 5.98, 0.46, 0.26, -20, 0.75], [2.65, 5.65, 0.34, 0.28, -35, 0.5], [1.4, 5.15, 0.52, 0.3, -30, 0.65],
  [0.55, 4.38, 0.34, 0.3, 0, 1.7], [1.1, 3.4, 0.5, 0.36, 10, 0.95], [4, 4.8, 0.42, 0.5, -15, 0.95],
  [4.3, 4.15, 0.4, 0.25, 20, 0.3], [2.75, 3.45, 0.38, 0.55, 10, 0.7], [2.7, 4.3, 0.3, 0.3, 0, 0.25],
  [3.6, 3, 0.45, 0.28, -20, 0.45], [4.5, 2.7, 0.5, 0.34, 0, 0.9], [6.2, 3.4, 0.52, 0.42, 0, 1.1],
  [6.2, 2.6, 0.28, 0.4, 0, 0.4], [7.78, 2.75, 0.48, 0.36, 45, 1.0], [3.1, 1.98, 0.55, 0.24, -8, 0.6],
  [1.4, 2.35, 0.45, 0.16, -52, 1.2], [2.7, 1.15, 0.5, 0.18, -33, 1.4], [2, 1.7, 0.4, 0.12, -42, 0.7],
  [4.7, 0.46, 0.55, 0.19, -4, 2.0], [6, 1.15, 0.65, 0.24, 0, 0.4], [3.4, 1, 0.3, 0.3, 0, 0.5],
  [8.2, 1.75, 0.6, 0.13, 44, 1.1], [6.65, 5.65, 0.34, 0.42, 0, 0.3], [8, 6.3, 0.26, 0.4, 10, 0.35],
  [8.75, 4.3, 0.18, 0.65, 0, 0.4], [9.42, 5.1, 0.1, 0.75, 4, 1.6], [8.55, 7.75, 0.55, 0.24, -58, 1.0],
  [5.4, 9.15, 0.5, 0.24, 30, 0.5], [5, 8.5, 0.3, 0.5, 0, 0.35], [5.7, 4.5, 0.5, 0.25, 0, 0.2],
  [9.1, 3, 0.5, 0.1, 65, 0.6], [2.6, 8.9, 0.5, 0.12, 38, 0.4], [0.8, 5.9, 0.2, 0.4, 0, 0.2],
  [3.6, 8.55, 0.7, 0.3, 30, -0.26], [3.5, 5.7, 0.3, 0.3, 0, -0.25], [7, 1.8, 0.7, 0.3, 20, -0.3],
  [5.5, 2.2, 0.25, 0.6, 0, -0.25], [5.1, 5.3, 0.4, 0.3, 0, -0.2], [1, 6.6, 0.4, 0.5, 0, -0.25],
  [3.2, 4.2, 0.25, 0.5, 0, -0.15], [5, 1.7, 0.8, 0.3, 0, -0.15], [5.6, 5.1, 0.5, 0.3, 0, -0.15],
  [6.5, 6.9, 0.5, 0.6, 0, -0.05], [7.5, 6, 0.3, 1, 10, -0.1], [2, 6.9, 0.8, 0.3, 0, -0.1],
];

/* paths along which the field changes sign */
const VALLEYS: number[][][] = [
  [[5.5, 8.34], [5.36, 8.76], [5.67, 9.2], [6.2, 9.48], [6.76, 9.06], [7, 8.54], [7.14, 8.14], [6.87, 7.68], [6.37, 7.47], [5.94, 7.78], [5.5, 8.34]],
  [[1.26, 7.39], [1.72, 7.85], [1.92, 7.99], [2.44, 8.54], [2.95, 8.85], [3.67, 9.16]],
  [[1.06, 6.99], [1.72, 6.99], [2.29, 7.39], [2.64, 7.65], [3.15, 7.95], [3.67, 8.1], [4.3, 7.9]],
  [[3.2, 8.5], [3.8, 8.7], [4.2, 8.3]],
  [[2.59, 6.38], [2.64, 6.69], [2.9, 6.99], [3.36, 7.15], [3.82, 6.99], [3.97, 6.69], [3.72, 6.23], [3.31, 5.92], [2.9, 6.12], [2.59, 6.38]],
  [[3.4, 5.92], [4.18, 5.66], [4.84, 5.5], [5.4, 5.6], [5.86, 6.2], [6, 7]],
  [[3.4, 5.92], [3.15, 5.4], [2.95, 4.79], [3.05, 4.12], [3.36, 3.67], [3.67, 3.46], [4.4, 3.46], [5.05, 3.3], [5.4, 2.9], [5.6, 2.48], [5.6, 1.8]],
  [[0.5, 5.02], [0.9, 4.95], [1.15, 4.6], [1.2, 4.3], [1.05, 4], [0.75, 3.7]],
  [[0.85, 6.3], [0.9, 5.9], [1.31, 5.7], [1.83, 5.45], [2.18, 5.1], [2.23, 4.7], [1.98, 4.1], [1.98, 3.56], [1.92, 3.1], [1.5, 2.8], [1.05, 2.85]],
  [[4.84, 5.5], [5.05, 5.1], [4.84, 4.63], [5.05, 4], [4.44, 3.7], [3.67, 3.56]],
  [[1.92, 2.6], [2.53, 2.47], [3.15, 2.56], [3.76, 2.4], [4.18, 2.03], [4.13, 1.67], [3.72, 1.4], [3.15, 1.47], [2.44, 1.78], [2.03, 2.13], [1.92, 2.6]],
  [[3.6, 0.7], [4.18, 0.9], [4.95, 0.93], [5.45, 0.78], [5.9, 0.7], [6.4, 0.75]],
  [[5.5, 1.75], [6.07, 1.63], [6.8, 1.72], [7.2, 1.47]],
  [[6.9, 1.5], [7.6, 1.98], [8.17, 2.29], [8.68, 2.55]],
  [[6.84, 1.98], [6.8, 2.48], [6.9, 2.9], [7.1, 3.25], [7.36, 3.5], [8, 3.6], [8.6, 3.36], [9.1, 3.5]],
  [[5.05, 4], [5.6, 3.9], [6.2, 4.08], [7, 3.9], [7.36, 3.5]],
  [[8.3, 5.5], [8.25, 4.65], [8.23, 4], [8.6, 3.36]],
  [[9.2, 3.6], [9.25, 4.65], [9.1, 5.6], [8.7, 5.75], [8.3, 5.5]],
  [[7.1, 5.2], [6.5, 5.05], [5.9, 5.3], [5.5, 5.6]],
  [[7.97, 8.14], [7.75, 7.83], [7.6, 7.42], [7.4, 6.96], [7.44, 6.54], [7.3, 5.75], [7.1, 5.2]],
  [[8.8, 7.3], [8.46, 7.1], [8.55, 6.2], [8.9, 5.8]],
  [[4.84, 9.37], [4.2, 9], [4.3, 8.5], [4.5, 7.8], [4.52, 7.42], [4.73, 7.07], [5.22, 6.86], [5.8, 6.9]],
  [[1.5, 2.8], [1.8, 2.3], [2.3, 1.8], [3, 1.4], [3.7, 1.35], [5, 1.5], [5.6, 1.8]],
  [[6.85, 9], [6.95, 8.8], [7.2, 8.3], [7.7, 8.05], [8.1, 8.15]],
];

const hash = (i: number, j: number) => {
  const s = Math.sin(i * 127.1 + j * 311.7) * 43758.5453;
  return (s - Math.floor(s)) * 2 - 1;
};

const segDist2 = (x: number, y: number, a: number[], b: number[]) => {
  const dx = b[0] - a[0], dy = b[1] - a[1];
  const t = Math.max(0, Math.min(1, ((x - a[0]) * dx + (y - a[1]) * dy) / (dx * dx + dy * dy)));
  return (x - a[0] - t * dx) ** 2 + (y - a[1] - t * dy) ** 2;
};

function fieldAt(x: number, y: number, i: number, j: number) {
  let v = 0.48;
  for (const [px, py, rx, ry, deg, amp] of PEAKS) {
    const c = Math.cos((deg * Math.PI) / 180), s = Math.sin((deg * Math.PI) / 180);
    const u = ((x - px) * c + (y - py) * s) / rx;
    const w = (-(x - px) * s + (y - py) * c) / ry;
    v += amp * Math.exp(-(u * u + w * w) / 2);
  }
  const wx = x + 0.05 * Math.sin(4.3 * y + 1.7 * x);
  const wy = y + 0.05 * Math.sin(3.9 * x - 1.3 * y);
  let d2 = 9;
  for (const path of VALLEYS) for (let k = 1; k < path.length; k++) d2 = Math.min(d2, segDist2(wx, wy, path[k - 1], path[k]));
  v *= 1 - 1.05 * Math.exp(-Math.sqrt(d2) / 0.13);
  const streak = hash(i, Math.floor(j / 5)) * 0.07 + hash(Math.floor(i / 5), j + 50) * 0.05;
  return Math.abs(v + hash(i, j) * 0.06 + streak);
}

const STEP = 0.1;
const NODES_PER_SIDE = 94;

function drawField(canvas: HTMLCanvasElement) {
  const ctx = canvas.getContext("2d");
  if (!ctx) return;
  const grid: number[][] = [];
  for (let j = 0; j < NODES_PER_SIDE; j++) {
    grid.push([]);
    for (let i = 0; i < NODES_PER_SIDE; i++) grid[j].push(fieldAt(0.4 + i * STEP, 0.4 + j * STEP, i, j));
  }
  const img = ctx.createImageData(VIEW_W, VIEW_H);
  const cx = toX(5), cy = toY(5), r = 293;
  for (let py = 0; py < VIEW_H; py++) {
    for (let px = 0; px < VIEW_W; px++) {
      const edge = r - Math.hypot(px - cx, py - cy);
      if (edge <= -0.5) continue;
      const gx = ((px - 119) / 65.1 - 0.4) / STEP;
      const gy = (5 - (py - 356) / 65.2 - 0.4) / STEP;
      const i = Math.max(0, Math.min(NODES_PER_SIDE - 2, Math.floor(gx)));
      const j = Math.max(0, Math.min(NODES_PER_SIDE - 2, Math.floor(gy)));
      const fx = gx - i, fy = gy - j;
      const a = grid[j][i], b = grid[j][i + 1], c = grid[j + 1][i], d = grid[j + 1][i + 1];
      const v = fx > fy ? a + (b - a) * fx + (d - b) * fy : a + (c - a) * fy + (d - c) * fx;
      const [R, G, B] = colorAt(v);
      const o = (py * VIEW_W + px) * 4;
      img.data[o] = R;
      img.data[o + 1] = G;
      img.data[o + 2] = B;
      img.data[o + 3] = 255 * Math.min(1, edge + 0.5);
    }
  }
  ctx.putImageData(img, 0, 0);
}

const AxisText = styled.text`
  font: 12px "DejaVu Sans", sans-serif;
  fill: #1c1c1c;
`;

const Exponent = styled.tspan`
  font-size: 9px;
`;

const X_TICKS = [-1, 0, 1, 2, 3, 4, 5, 6, 7, 8, 9, 10, 11];
const Y_TICKS = Array.from({ length: 19 }, (_, k) => 0.5 + k * 0.5);
const BAR_TICKS = [0.5, 1, 1.5, 2, 2.5, 3];
const barY = (v: number) => 673 - 195 * v;

function Plot() {
  const ref = useRef<HTMLCanvasElement>(null);
  useLayoutEffect(() => {
    if (ref.current) drawField(ref.current);
  }, []);
  return (
    <PlotArea>
      <canvas ref={ref} width={VIEW_W} height={VIEW_H} />
      <svg viewBox={`0 0 ${VIEW_W} ${VIEW_H}`} role="img" aria-label="Surface plot with color legend">
        <defs>
          <linearGradient id="bar" x1="0" y1="1" x2="0" y2="0">
            {COLORS.map(([v, r, g, b]) => <stop key={v} offset={v / 3.12} stopColor={`rgb(${r},${g},${b})`} />)}
          </linearGradient>
        </defs>
        <path d="M49 34H840V679H49z" fill="none" stroke="#808080" strokeWidth="2" />
        {X_TICKS.map((x) => (
          <g key={x}>
            <path d={`M${toX(x)} 35v6M${toX(x)} 679v-6`} stroke="#808080" strokeWidth="2" />
            <AxisText x={toX(x)} y={697} textAnchor="middle">{x === 11 ? "m" : x}</AxisText>
          </g>
        ))}
        {Y_TICKS.map((y) => (
          <g key={y}>
            <path d={`M49 ${toY(y)}h6M840 ${toY(y)}h-6`} stroke="#808080" strokeWidth="2" />
            <AxisText x={44} y={toY(y) + 4} textAnchor="end">{y}</AxisText>
          </g>
        ))}
        <AxisText x={2} y={39}>m</AxisText>
        <AxisText x={444} y={25} textAnchor="middle">abs(dnn1(x1,x2)-int1(x1,x2))</AxisText>
        <path d={`M${toX(6.22) - 1} ${toY(8.5) - 2}h3v4h-3z`} fill="#000" />
        <AxisText x={537} y={143}>max: 0.0310095</AxisText>
        <rect x="861.500" y="67.500" width="15" height="605" fill="url(#bar)" stroke="#444" />
        {BAR_TICKS.map((v) => (
          <g key={v}>
            <path d={`M862 ${barY(v)}h3M873 ${barY(v)}h3`} stroke="#222" />
            <AxisText x={885} y={barY(v) + 4}>{v}</AxisText>
          </g>
        ))}
        <AxisText x={877} y={57}>×10<Exponent dy="-5">-2</Exponent></AxisText>
        <g transform="translate(906 4)"><Cube s={20} /></g>
      </svg>
    </PlotArea>
  );
}

/* ---------- page ---------- */

const Cmd = ({ icon, children, off }: { icon: ReactNode; children: ReactNode; off?: boolean }) => (
  <Command disabled={off}>{icon}{children}</Command>
);

const Big = ({ icon, w, l1, l2, menu, on, off }: { icon: ReactNode; w: number; l1: string; l2?: string; menu?: boolean; on?: boolean; off?: boolean }) => (
  <BigButton $w={w} $on={on} disabled={off}>
    <BigIcon>{icon}</BigIcon>
    <LabelLine>{l1}</LabelLine>
    <LabelLine>{l2}{menu && <MiniChevron />}</LabelLine>
  </BigButton>
);

const MENU: [string, boolean?][] = [["File"], ["Home"], ["Definitions", true], ["Geometry", true], ["Materials"], ["Physics", true], ["Mesh", true], ["Study"], ["Results"], ["Developer"]];

export default function App() {
  return (
    <>
      <GlobalStyle />
      <Window>
        <TitleBar>
          <AppMark><Cube /></AppMark>
          <QuickButton aria-label="New"><NewFile /></QuickButton>
          <QuickButton aria-label="Open"><OpenFile /></QuickButton>
          <QuickButton aria-label="Save"><SaveIcon /></QuickButton>
          <QuickButton aria-label="Save as"><SaveAs /></QuickButton>
          <QuickButton aria-label="Run"><Play /></QuickButton>
          <QuickButton aria-label="Undo" $w={28}><Undo /></QuickButton>
          <QuickButton aria-label="Undo list" $w={10}><Chevron c="#666" /></QuickButton>
          <QuickButton aria-label="Redo" $w={28}><Undo flip /></QuickButton>
          <QuickButton aria-label="Redo list" $w={10}><Chevron c="#666" /></QuickButton>
          <QuickButton aria-label="Cut" $w={34}><Cut /></QuickButton>
          <QuickButton aria-label="Copy"><Copy /></QuickButton>
          <QuickButton aria-label="Paste"><Paste /></QuickButton>
          <QuickButton aria-label="Duplicate"><Duplicate /></QuickButton>
          <QuickButton aria-label="Delete"><Trash /></QuickButton>
          <QuickButton aria-label="Select"><SelectIcon /></QuickButton>
          <QuickButton aria-label="Clear"><Broom /></QuickButton>
          <QuickButton aria-label="Find"><Find /></QuickButton>
          <QuickButton aria-label="Customize" $w={32}><More /></QuickButton>
          <WindowTitle>dnn_approximation_4_8_4_layers_64.mph - COMSOL Multiphysics</WindowTitle>
          <WindowButton aria-label="Minimize"><Svg w={10} h={10}><path d="M0 5.500h10" stroke="#333" /></Svg></WindowButton>
          <WindowButton aria-label="Maximize"><Svg w={10} h={10}><path d="M.5.5h9v9h-9z" stroke="#333" /></Svg></WindowButton>
          <WindowButton aria-label="Close"><Svg w={10} h={10}><path d="M0 0l10 10M10 0L0 10" stroke="#333" /></Svg></WindowButton>
        </TitleBar>

        <MenuBar>
          {MENU.map(([name, off], i) => <MenuTab key={name} $off={off} $first={i === 0}>{name}</MenuTab>)}
          <MenuTab $on>2D Plot Group 4</MenuTab>
          <HelpButton>?</HelpButton>
        </MenuBar>

        <Ribbon>
          <Group $w={106} $pad={12}>
            <GroupBody>
              <Big w={41} icon={<PlotWin />} l1="Plot" />
              <Big w={46} icon={<PlotIn />} l1="Plot" l2="In" menu />
            </GroupBody>
            <GroupLabel $pad={12}>Plot</GroupLabel>
          </Group>
          <Group $w={382} $pad={13}>
            <GroupBody>
              <Commands $cols="135px 87px 86px">
                <Cmd icon={<Square />}>Surface</Cmd>
                <Cmd icon={<Height />}>Surface with Height</Cmd>
                <Cmd icon={<ArrowSurface />}>Arrow Surface</Cmd>
                <Cmd icon={<LineIcon />}>Line</Cmd>
                <Cmd icon={<Contour />}>Contour</Cmd>
                <Cmd icon={<Streamline />}>Streamline</Cmd>
                <Cmd icon={<ArrowLine />}>Arrow Line</Cmd>
                <Cmd icon={<MeshIcon />}>Mesh</Cmd>
                <Cmd icon={<Annotation />}>Annotation</Cmd>
              </Commands>
              <Big w={52} icon={<BigSquare />} l1="More" l2="Plots" menu />
            </GroupBody>
            <GroupLabel $pad={13}>Add Plot</GroupLabel>
          </Group>
          <Group $w={360} $pad={12}>
            <GroupBody>
              <Commands $cols="125px 137px">
                <Cmd off icon={<PaletteIcon off />}>Color Expression</Cmd>
                <Cmd off icon={<Deform />}>Deformation</Cmd>
                <Cmd off icon={<Height off />}>Height Expression</Cmd>
                <Cmd off icon={<Funnel />}>Filter</Cmd>
                <Cmd off icon={<MaterialApp />}>Material Appearance</Cmd>
                <Cmd off icon={<Selection />}>Selection</Cmd>
              </Commands>
              <Big w={76} off icon={<BigSquare c="#c6c6c8" />} l1="More" l2="Attributes" menu />
            </GroupBody>
            <GroupLabel $pad={12}>Attributes</GroupLabel>
          </Group>
          <Group $w={182} $pad={8}>
            <GroupBody>
              <Big w={60} on icon={<Evaluate />} l1="Evaluate" />
              <Big w={58} icon={<Evaluate />} l1="Marker" l2="Point" />
              <Big w={46} icon={<CutLine />} l1="Cut" l2="Line" menu />
            </GroupBody>
            <GroupLabel $pad={8}>Graphics Interaction</GroupLabel>
          </Group>
          <Group $w={140} $pad={6}>
            <GroupBody>
              <Big w={53} icon={<ImageIcon />} l1="Image" />
              <Big w={72} icon={<Film />} l1="Animation" menu />
            </GroupBody>
            <GroupLabel $pad={6}>Export</GroupLabel>
          </Group>
        </Ribbon>

        <Workspace>
          <Panel $pad="0 5px 8px">
            <PanelHead>
              <PanelTitle>Model Builder</PanelTitle>
              <DockIcons />
            </PanelHead>
            <ToolRow>
              <Tool $w={21} aria-label="Back"><Arrow dir={0} /></Tool>
              <Tool $w={23} aria-label="Forward"><Arrow dir={180} c="#a0a0a0" /></Tool>
              <Tool $w={23} aria-label="Up"><Arrow dir={90} /></Tool>
              <Tool $w={23} aria-label="Down"><Arrow dir={270} c="#a0a0a0" /></Tool>
              <Tool $w={24} aria-label="Show"><EyeIcon /></Tool>
              <Tool $w={22} aria-label="Collapse"><ListArrow up /></Tool>
              <Tool $w={12} aria-label="Collapse menu"><Caret /></Tool>
              <Tool $w={32} aria-label="Expand"><ListArrow /></Tool>
              <Tool $w={10} aria-label="Expand menu"><Caret /></Tool>
              <Tool $w={30} aria-label="Columns"><Columns /></Tool>
              <Tool $w={10} aria-label="Columns menu"><Caret /></Tool>
              <Tool $w={32} aria-label="Filter"><Funnel top={BLUE} body={GREY} /></Tool>
              <Tool $w={8} aria-label="Filter menu"><Caret /></Tool>
            </ToolRow>
            <FilterRow>
              <TextBox aria-label="Type filter text" placeholder="Type filter text" />
              <Tool $w={16} aria-label="Refresh"><Refresh /></Tool>
            </FilterRow>
            <Tree>
              {NODES.map((n, i) => (
                <TreeRow key={i} $depth={n.d} $on={n.on}>
                  <Twisty>{n.open === true ? <Chevron /> : n.open === false ? <ChevronRight /> : null}</Twisty>
                  <TreeIcon>{n.icon}</TreeIcon>
                  <span>{n.text}{n.tag && <em> ({n.tag})</em>}</span>
                </TreeRow>
              ))}
            </Tree>
          </Panel>

          <Panel $pad="0 5px">
            <PanelHead>
              <PanelTitle>Settings</PanelTitle>
              <DockIcons />
            </PanelHead>
            <SubTitle>Filter</SubTitle>
            <PlotButton><PlotWin w={16} h={13} />Plot</PlotButton>
            <LabelRow>
              <label htmlFor="node-label">Label:</label>
              <TextBox id="node-label" defaultValue="Filter 1" />
              <RenameButton aria-label="Rename"><RenameIcon /></RenameButton>
            </LabelRow>
            <SectionHead>
              <Chevron c={NAVY} />
              <SectionTitle>Element Selection</SectionTitle>
              <Tool $w={16} aria-label="Insert"><FieldIcon /></Tool>
              <Tool $w={18} aria-label="Insert menu"><Caret /></Tool>
              <Tool $w={26} aria-label="Replace"><FieldIcon full /></Tool>
              <Tool $w={10} aria-label="Replace menu"><Caret /></Tool>
            </SectionHead>
            <FieldLabel htmlFor="logical">Logical expression for inclusion:</FieldLabel>
            <ExpressionRow><TextBox id="logical" defaultValue="(x1-5)^2+(x2-5)^2<4.5^2" /></ExpressionRow>
          </Panel>

          <RightColumn>
            <GraphicsPanel>
              <TabStrip>
                <TabSet>
                  <Tab $on $line $w={61}>Graphics</Tab>
                  <TabGap />
                  <Tab $w={122}><TabName $w={76}>Function Plot</TabName><Cross /></Tab>
                  <Tab $w={140}><TabName $w={115}>Convergence Plot 1</TabName><Cross /></Tab>
                </TabSet>
                <DockIcons />
              </TabStrip>
              <GraphicsTools>
                <Tool $w={23} aria-label="Zoom in"><Zoom mode="in" /></Tool>
                <Tool $w={23} aria-label="Zoom out"><Zoom mode="out" /></Tool>
                <Tool $w={23} aria-label="Zoom box"><Zoom mode="box" /></Tool>
                <Tool $w={12} aria-label="Zoom menu"><Caret /></Tool>
                <Tool $w={30} aria-label="Zoom extents"><Extents /></Tool>
                <Rule $gap={2} />
                <Tool $w={26} aria-label="View"><Axes /></Tool>
                <Tool $w={10} aria-label="View menu"><Caret /></Tool>
                <Rule $gap={8} />
                <ToggleSet>
                  <Tool $w={20} $on aria-label="Grid"><GridToggle /></Tool>
                  <Tool $w={20} $on aria-label="Legend"><LegendToggle /></Tool>
                </ToggleSet>
                <Rule $gap={4} />
                <Tool $w={22} aria-label="Colors"><PaletteIcon /></Tool>
                <Tool $w={10} aria-label="Colors menu"><Caret /></Tool>
                <Rule $gap={9} />
                <Tool $w={18} aria-label="Scene"><Aperture /></Tool>
                <Tool $w={18} aria-label="Scene menu"><Caret /></Tool>
                <Tool $w={26} aria-label="Snapshot"><Camera /></Tool>
                <Tool $w={22} aria-label="Print"><Printer /></Tool>
              </GraphicsTools>
              <Plot />
            </GraphicsPanel>
            <Panel>
              <BottomStrip>
                <TabSet>
                  <Tab $w={107}><TabName $w={61}>Messages</TabName><Cross /></Tab>
                  <Tab $w={78}>Progress</Tab>
                  <Tab $w={48}>Log</Tab>
                  <Tab $w={110} $on><TabName $w={82}>Marker Points</TabName><Cross /></Tab>
                </TabSet>
                <DockIcons />
              </BottomStrip>
            </Panel>
          </RightColumn>
        </Workspace>
        <StatusBar>2.25 GB | 2.85 GB</StatusBar>
      </Window>
    </>
  );
}
